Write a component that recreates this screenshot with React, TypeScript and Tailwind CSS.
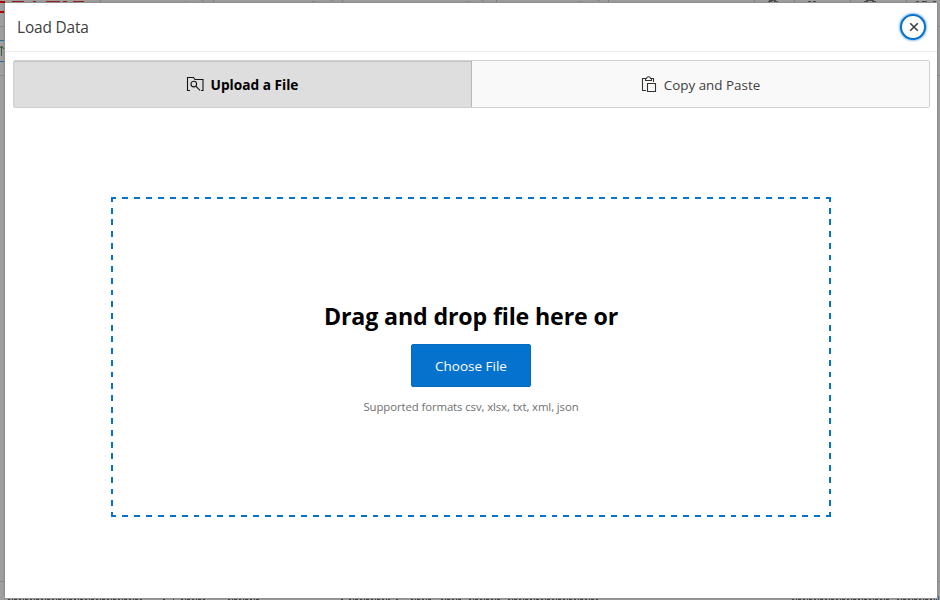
import React from "react";

function FolderSearchIcon() {
  return (
    <svg width="18" height="16" viewBox="0 0 18 16" fill="none" stroke="#161513" strokeWidth="1.1" className="shrink-0">
      <path d="M4 14.5H1.5V1.5H7.5L9 3.5H17V14.5H15" />
      <circle cx="7.8" cy="8.1" r="2.8" />
      <path d="M9.8 10.2L14 14.4" />
    </svg>
  );
}

function PasteIcon() {
  return (
    <svg width="16" height="17" viewBox="0 0 16 17" fill="none" stroke="#35322f" strokeWidth="1.1" className="shrink-0">
      <path d="M5 14.5H1.5V2.5H4.5M10.5 2.5H12.5V6" />
      <path d="M4.5 4.5V2.5H5.5C5.7 1.3 6.4 .8 7.5 .8S9.3 1.3 9.5 2.5H10.5V4.5Z" />
      <path d="M6.5 7.5H14.5V15.5H6.5Z" />
    </svg>
  );
}

function Backdrop() {
  return (
    <div aria-hidden="true" className="absolute inset-0 overflow-hidden bg-[#9f9f9f]">
      <div className="absolute left-0 top-px h-[2px] w-[5px] bg-[#a80000]" />
      <div className="absolute left-0 top-[11px] h-[2px] w-[4px] bg-[#a80000]" />
      <div className="absolute left-0 top-[26px] h-px w-[4px] bg-[#8c8c8c]" />
      <div className="absolute left-0 top-[40px] h-px w-[4px] bg-[#2d6c9f]" />
      <div className="absolute left-0 top-[61px] h-px w-[4px] bg-[#2d6c9f]" />
      <div className="absolute left-0 top-[75px] h-px w-[4px] bg-[#8c8c8c]" />
      <div className="absolute left-0 top-[581px] h-px w-[4px] bg-[#8c8c8c]" />
      <div className="absolute right-0 top-[26px] h-px w-[2px] bg-[#8c8c8c]" />
      <div className="absolute right-0 top-[75px] h-px w-[2px] bg-[#8c8c8c]" />
      <div className="absolute right-0 top-[581px] h-px w-[2px] bg-[#8c8c8c]" />
      <div className="absolute right-[1px] top-[596px] h-[4px] w-[1px] bg-[#2d6c9f]" />
      <svg width="5" height="14" viewBox="0 0 5 14" className="absolute left-0 top-[45px]" fill="none" stroke="#3f5a3f">
        <path d="M1.5 11V1M-1 4L1.5 1L4 4" />
      </svg>
      <svg width="940" height="3" viewBox="0 0 940 3" className="absolute left-0 top-0">
        <path d="M12 1.5H24M33 1.5H36M46 1.5H60M63 1.5H67M73 1.5H84" stroke="#a02020" strokeWidth="1" />
        <path d="M100.5 0V2M213.5 0V2M342.5 0V2M496.5 0V2M608.5 0V2M754.5 0V2M794.5 0V2M850.5 0V2M906.5 0V2" stroke="#858585" />
        <path d="M185 1.5H187M201 .5H204M312 1.5H315M330 .5H333M466 1.5H469M481 .5H484M579 1.5H582M597 .5H600" stroke="#8f8f8f" />
        <path d="M768 1.5H772M774 1.5H778M769 .5H776M808 1.5H811M813 1.5H816M864 1.5H868M872 1.5H876M866 .5H874M916 1.5H919M922 1.5H927M933 1.5H936" stroke="#4e4e4e" />
      </svg>
      <svg width="940" height="1" viewBox="0 0 940 1" className="absolute bottom-0 left-0">
        <path
          d="M8 .5H142M163 .5H165M173 .5H174M181 .5H207M228 .5H261M341 .5H343M349 .5H390M396 .5H398M411 .5H432M441 .5H462M469 .5H502M508 .5H598M792 .5H889M897 .5H937"
          stroke="#45413e"
          strokeDasharray="2 2 1 1 3 2"
        />
      </svg>
    </div>
  );
}

export default function App() {
  return (
    <div className="relative h-[600px] w-[940px] overflow-hidden font-['Open_Sans','Noto_Sans',sans-serif]">
      <Backdrop />
      <section role="dialog" aria-label="Load Data" className="relative ml-[5px] mt-[3px] flex h-[595px] w-[932px] flex-col bg-white shadow-[0_0_3px_rgba(0,0,0,0.25)]">
        <header className="flex h-[49px] shrink-0 items-center justify-between border-b border-[#ebebeb] pl-3 pr-[11px]">
          <h1 className="pt-[2px] text-[15.4px] leading-6 tracking-[-0.15px] text-[#404040]">Load Data</h1>
          <button aria-label="Close" className="flex size-[26px] items-center justify-center rounded-full border-2 border-[#0572ce] bg-white shadow-[0_0_2px_1px_rgba(5,114,206,0.45)]">
            <svg width="10" height="10" viewBox="0 0 10 10" fill="none" stroke="#404040" strokeWidth="1.6" className="ml-px">
              <path d="M1.2 1.2L8.8 8.8M8.8 1.2L1.2 8.8" />
            </svg>
          </button>
        </header>
        <div role="tablist" className="ml-2 mr-[7px] mt-2 flex h-12 shrink-0 overflow-hidden rounded-[2px] border border-[#d0d0d0]">
          <button role="tab" className="-ml-px -mt-px flex h-12 w-[459px] items-center justify-center rounded-l-[2px] border border-[#b8b8b8] bg-[#dedede] text-black shadow-[inset_0_1px_1px_rgba(0,0,0,0.12)]">
            <FolderSearchIcon />
            <span className="ml-[7px] mr-px pt-[2px] text-[13.7px] font-bold leading-5">Upload a File</span>
          </button>
          <button role="tab" className="flex flex-1 items-center justify-center bg-[#f9f9f9] text-[#404040]">
            <PasteIcon />
            <span className="ml-[7px] pt-[2px] text-[13.4px] leading-5">Copy and Paste</span>
          </button>
        </div>
        <main className="ml-[106px] mt-[89px] flex h-[320px] w-[720px] flex-col items-center bg-no-repeat bg-[repeating-linear-gradient(90deg,#0572ce_-1px,#0572ce_4.967px,transparent_4.967px,transparent_10.933px),repeating-linear-gradient(90deg,#0572ce_-1px,#0572ce_4.967px,transparent_4.967px,transparent_10.933px),repeating-linear-gradient(180deg,#0572ce_-1px,#0572ce_4.85px,transparent_4.85px,transparent_10.704px),repeating-linear-gradient(180deg,#0572ce_-1px,#0572ce_4.85px,transparent_4.85px,transparent_10.704px)] [background-position:0_0,0_100%,0_0,100%_0] [background-size:100%_2px,100%_2px,2px_100%,2px_100%]">
          <h2 className="mt-[103px] text-[23.2px] font-bold leading-8 tracking-[-0.15px] text-black">Drag and drop file here or</h2>
          <button className="mt-[12px] flex h-[43px] w-[120px] items-center justify-center rounded-[2px] border border-[#056bc1] bg-[#0572ce] pt-[2px] text-[13.5px] text-white">
            Choose File
          </button>
          <p className="mt-[11px] text-[11.4px] leading-[18px] tracking-[-0.11px] text-[#707070]">Supported formats csv, xlsx, txt, xml, json</p>
        </main>
      </section>
    </div>
  );
}
